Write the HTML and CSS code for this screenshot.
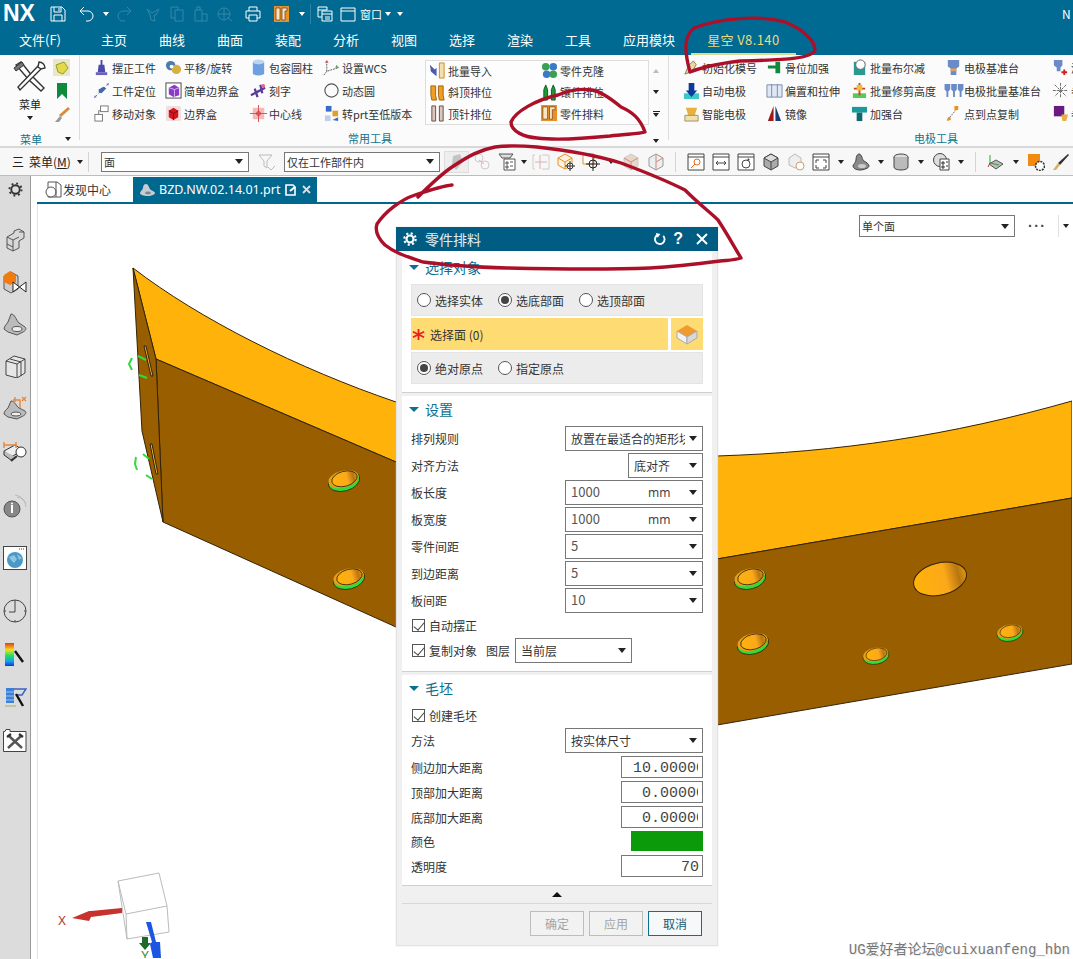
FILE: index.html
```html
<!DOCTYPE html>
<html lang="zh">
<head>
<meta charset="utf-8">
<title>NX 零件排料</title>
<link rel="stylesheet" href="styles.css">
</head>
<body>
<div class="app">
  <header class="titlebar">
    <strong class="logo">NX</strong>
    <svg class="qa s1" viewBox="0 0 16 16"><path d="M1 1h11l3 3v11H1zM4 1v5h7V1M4 15V9h8v6M9 2v3" fill="none" stroke="#fff"/></svg>
    <svg class="qa s2" viewBox="0 0 16 16"><path d="M1 5l4-4M1 5l4 4M1 5h8a5 5 0 0 1 0 10H7" fill="none" stroke="#fff"/></svg>
    <i class="caret w m7"></i>
    <svg class="qa s3 off" viewBox="0 0 16 16"><path d="M15 5l-4-4M15 5l-4 4M15 5H7a5 5 0 0 0 0 10h2" fill="none" stroke="#fff"/></svg>
    <svg class="qa s4 off" viewBox="0 0 16 16"><path d="M2 3l5 4 2-1 5-3-3 6-2 0 1 6-4-1-1-5z" fill="none" stroke="#fff"/></svg>
    <svg class="qa s5 off" viewBox="0 0 16 16"><path d="M2 1h7v3h5v11H6v-3H2zM6 4h3M6 12V4" fill="none" stroke="#fff"/></svg>
    <svg class="qa s5 off" viewBox="0 0 16 16"><path d="M2 4h7v11H2zM4 4V1h3v3M9 8h5v7H9" fill="none" stroke="#fff"/></svg>
    <svg class="qa s5 off" viewBox="0 0 16 16"><circle cx="7" cy="8" r="6" fill="none" stroke="#fff"/><path d="M1 8h12M7 2v12M10 11l5 4" fill="none" stroke="#fff"/></svg>
    <svg class="qa s6" viewBox="0 0 16 16"><path d="M4 5V1h8v4M4 12H1V5h14v7h-3M4 9h8v6H4z" fill="none" stroke="#fff"/></svg>
    <svg class="qa s7" viewBox="0 0 16 16"><rect width="15" height="16" fill="#e8902a"/><path d="M2 2h4v12H2zM8 2h5v3h-2v9H8z" fill="#f6e5c4" stroke="#6b3a10" stroke-width=".7"/></svg>
    <i class="caret w m8"></i>
    <span class="qsep"></span>
    <svg class="qa s8" viewBox="0 0 16 16"><path d="M1 1h9v3H1zM5 5h10v10H5zM5 8h10M1 4v7h4M8 11h5M8 13h5" fill="none" stroke="#fff"/></svg>
    <svg class="qa s9" viewBox="0 0 16 16"><path d="M1 2h14v13H1zM1 5h14" fill="none" stroke="#fff"/></svg>
    <span class="wintext">窗口</span>
    <i class="caret w m9"></i>
    <i class="caret w m10"></i>
    <span class="apptitle">N</span>
  </header>

  <nav class="tabs">
    <span class="tab file">文件(F)</span>
    <span class="tab">主页</span>
    <span class="tab">曲线</span>
    <span class="tab">曲面</span>
    <span class="tab">装配</span>
    <span class="tab">分析</span>
    <span class="tab">视图</span>
    <span class="tab">选择</span>
    <span class="tab">渲染</span>
    <span class="tab">工具</span>
    <span class="tab">应用模块</span>
    <span class="tab active">星空 V8.140</span>
  </nav>

  <section class="ribbon">
    <div class="group g1">
      <div class="gbody">
        <div class="bigbtn">
          <svg width="34" height="32" viewBox="0 0 34 32"><path d="M3 5l5-3 12 15 11 11-3 3-12-11z" fill="#fff" stroke="#333" stroke-width="1.4"/><path d="M26 2a6 6 0 0 1 6 6l-4 1-3-2zM25 6L5 27l2 3 21-21" fill="#fff" stroke="#333" stroke-width="1.4"/><path d="M1 8l8-6 2 3-8 6z" fill="#777" stroke="#333"/></svg>
          <span>菜单</span>
          <i class="caret"></i>
        </div>
        <div class="smallcol">
          <svg class="ri" viewBox="0 0 18 18"><rect width="17" height="17" fill="#ece6c8"/><path d="M3 6l8-3 4 6-5 6-5-2z" fill="#e4d94a" stroke="#88a030"/></svg>
          <svg class="ri" viewBox="0 0 18 18"><path d="M4 1h10v16l-5-5-5 5z" fill="#0d8a3c"/></svg>
          <svg class="ri" viewBox="0 0 18 18"><path d="M15 2l2 2-9 8-2-2z" fill="#d98a3a"/><path d="M2 17l5-6 2 2-3 4z" fill="#999"/></svg>
        </div>
      </div>
      <div class="glabel between"><span>菜单</span><i class="caret"></i></div>
    </div>

    <div class="group g2">
      <div class="grid3 cg2">
        <span class="item"><svg class="ri" viewBox="0 0 18 18"><path d="M8 1h2v5h2l1 8H5l1-8h2z" fill="#4a4aa8"/><path d="M3 14h12v3H3z" fill="#6d5fc0"/></svg>摆正工件</span>
        <span class="item"><svg class="ri" viewBox="0 0 18 18"><circle cx="6" cy="7" r="5" fill="#4a7ab0"/><circle cx="12" cy="11" r="5" fill="#d8b040"/><circle cx="7" cy="8" r="2" fill="#fff"/></svg>平移/旋转</span>
        <span class="item"><svg class="ri" viewBox="0 0 18 18"><ellipse cx="9" cy="3" rx="6" ry="2.5" fill="#bcd4f0"/><path d="M3 3v12a6 2.5 0 0 0 12 0V3a6 2.5 0 0 1-12 0z" fill="#6e9fe0"/></svg>包容圆柱</span>
        <span class="item"><svg class="ri" viewBox="0 0 18 18"><path d="M4 2v11l13-4M4 13l-3 4" fill="none" stroke="#555" stroke-dasharray="2 1"/><path d="M2 4l2-3 2 3" fill="#c55"/><path d="M14 6l3 3-4 1" fill="#6a6"/></svg>设置WCS</span>
        <span class="item"><svg class="ri" viewBox="0 0 18 18"><path d="M3 15l12-12" stroke="#5577cc" stroke-dasharray="2 2"/><path d="M6 8l5-3 3 2-5 5-3-1z" fill="#4466aa"/><path d="M1 17l3-1-2-2zM17 1l-3 1 2 2z" fill="#5577cc"/></svg>工件定位</span>
        <span class="item"><svg class="ri" viewBox="0 0 18 18"><rect x="1" y="1" width="16" height="16" fill="#fff" stroke="#444"/><path d="M4 6l6-3 5 3v8l-6 2-5-3z" fill="#8a3ac8"/><path d="M4 6l6 2 5-2M10 8v8" stroke="#d8b8f0" fill="none"/></svg>简单边界盒</span>
        <span class="item"><svg class="ri" viewBox="0 0 18 18"><path d="M1 14l15-8M5 7l3 9M11 3l2 9" stroke="#5a3a9a" stroke-width="2.4" fill="none"/><circle cx="14" cy="4" r="2" fill="#e06a8a"/></svg>刻字</span>
        <span class="item"><svg class="ri noshrink" viewBox="0 0 18 18"><circle cx="9" cy="9" r="7" fill="none" stroke="#555" stroke-width="1.2"/></svg>动态圆</span>
        <span class="item"><svg class="ri" viewBox="0 0 18 18"><rect x="8" y="1" width="8" height="6" fill="#fff" stroke="#777"/><rect x="2" y="10" width="8" height="7" fill="#fff" stroke="#777"/><path d="M6 10V6h2" fill="none" stroke="#777"/></svg>移动对象</span>
        <span class="item"><svg class="ri" viewBox="0 0 18 18"><rect x="1" y="1" width="16" height="16" rx="2" fill="#f2dede"/><path d="M4 6l5-3 5 3v7l-5 3-5-3z" fill="#d61520"/><path d="M9 9v7M4 6l5 3 5-3" stroke="#7a0a10" fill="none"/></svg>边界盒</span>
        <span class="item"><svg class="ri" viewBox="0 0 18 18"><rect x="3" y="3" width="12" height="12" fill="#f6b8b8"/><path d="M9 0v18M0 9h18" stroke="#d85050"/><circle cx="9" cy="9" r="2" fill="none" stroke="#c03030"/></svg>中心线</span>
        <span class="item"><svg class="ri" viewBox="0 0 18 18"><rect x="3" y="1" width="6" height="6" fill="#3a6ac8"/><rect x="10" y="6" width="6" height="6" fill="#e0a030"/><rect x="2" y="11" width="6" height="6" fill="#bcd0e8"/><path d="M10 16l6-3v4z" fill="#3a6ac8"/></svg>转prt至低版本</span>
      </div>
      <div class="glabel center">常用工具</div>
    </div>

    <div class="gallery">
      <div class="gbox">
        <span class="item"><svg class="ri" viewBox="0 0 18 18"><path d="M1 3l5 5 2-2v9L2 10z" fill="#4a5ab0"/><path d="M11 1h5v16h-5z" fill="#f3e0b0" stroke="#d08820"/></svg>批量导入</span>
        <span class="item"><svg class="ri" viewBox="0 0 18 18"><circle cx="5" cy="5" r="4" fill="#3aa050"/><circle cx="13" cy="5" r="4" fill="#3a7ac8"/><circle cx="6" cy="13" r="4" fill="#3a7ac8"/><circle cx="13" cy="13" r="4" fill="#3aa050"/></svg>零件克隆</span>
        <span class="item"><svg class="ri" viewBox="0 0 18 18"><path d="M2 2h5v10l1 5H3l-1-5zM10 2h5v10l1 5h-5l-1-5z" fill="#f0a020" stroke="#a06010"/></svg>斜顶排位</span>
        <span class="item"><svg class="ri" viewBox="0 0 18 18"><path d="M3 17V6l2-5 2 5v11zM11 17V6l2-5 2 5v11z" fill="#1e9a3a" stroke="#0c5a1a"/></svg>镶件排位</span>
        <span class="item"><svg class="ri" viewBox="0 0 18 18"><path d="M3 1h4v16H3zM11 1h4v16h-4z" fill="#d8c8c0" stroke="#6a4a40"/></svg>顶针排位</span>
        <span class="item"><svg class="ri" viewBox="0 0 18 18"><rect width="17" height="17" fill="#e8902a"/><path d="M2 2h5v13H2zM9 2h6v3h-3v10H9z" fill="#f6e5c4" stroke="#6b3a10" stroke-width=".7"/></svg>零件排料</span>
      </div>
      <div class="gscroll">
        <i class="caret up faint"></i>
        <i class="caret"></i>
        <span class="more"><b></b><i class="caret"></i></span>
        <i class="caret"></i>
      </div>
    </div>

    <div class="group g4">
      <div class="grid5">
        <span class="item"><svg class="ri" viewBox="0 0 18 18"><path d="M2 16l4-9 5-5 3 4-4 7z" fill="#e8d8a8" stroke="#8a7a50"/></svg>初始化模号</span>
        <span class="item"><svg class="ri" viewBox="0 0 18 18"><path d="M2 7h8V3h5v12h-5v-5H2z" fill="#0e8a3a"/></svg>骨位加强</span>
        <span class="item"><svg class="ri" viewBox="0 0 18 18"><rect x="3" y="3" width="12" height="14" fill="#2a9a90"/><circle cx="10" cy="6" r="5" fill="#fff" stroke="#666"/></svg>批量布尔减</span>
        <span class="item"><svg class="ri" viewBox="0 0 18 18"><path d="M3 1h12v7l-3 2v7H6v-7L3 8z" fill="#6a8ac8"/><path d="M6 10h6v3H6z" fill="#e8a050"/></svg>电极基准台</span>
        <span class="item"><svg class="ri" viewBox="0 0 18 18"><path d="M2 1h9v6l-2 2v4H5V9L2 7z" fill="#6a8ac8"/><path d="M13 11v6M10 14h6" stroke="#d02020" stroke-width="2"/></svg>添加</span>
        <span class="item"><svg class="ri" viewBox="0 0 18 18"><path d="M1 12h16v6H1z" fill="#3ac8c8"/><path d="M6 1h6v8h3l-6 7-6-7h3z" fill="#0c3a9a"/></svg>自动电极</span>
        <span class="item"><svg class="ri" viewBox="0 0 18 18"><path d="M1 3h16v13H1z" fill="#dfe8f5" stroke="#7a8aa8"/><path d="M6 2v14M12 2v14" stroke="#7a8aa8"/></svg>偏置和拉伸</span>
        <span class="item"><svg class="ri" viewBox="0 0 18 18"><path d="M2 12h14v5H2z" fill="#58c858"/><path d="M9 1v13M3 7h12" stroke="#d04010" stroke-width="2"/><path d="M6 3h6v6H6z" fill="#e8c040"/></svg>批量修剪高度</span>
        <span class="item"><svg class="ri wide" viewBox="0 0 22 18"><path d="M1 2h6v6l-2 2v6H3v-6L1 8zM8 2h6v6l-2 2v6h-2v-6L8 8zM15 2h6v6l-2 2v6h-2v-6l-2-2z" fill="#6a8ac8"/></svg>电极批量基准台</span>
        <span class="item"><svg class="ri" viewBox="0 0 18 18"><path d="M9 1v16M1 9h16M3 3l12 12M15 3L3 15" stroke="#666" stroke-dasharray="3 1"/></svg>参数</span>
        <span class="item"><svg class="ri" viewBox="0 0 18 18"><path d="M3 3h12l-2 6v2H5V9z" fill="#e8b040"/><path d="M2 11h14v6H2z" fill="#f0e0b0" stroke="#a09060"/></svg>智能电极</span>
        <span class="item"><svg class="ri" viewBox="0 0 18 18"><path d="M8 1v16H2z" fill="#a01818"/><path d="M10 1v16h6z" fill="#1a3a7a"/></svg>镜像</span>
        <span class="item"><svg class="ri" viewBox="0 0 18 18"><path d="M1 2h16v6H1z" fill="#1a9a9a"/><path d="M6 8h6v9H6z" fill="#0d6a70"/></svg>加强台</span>
        <span class="item"><svg class="ri" viewBox="0 0 18 18"><path d="M2 17l4-1v-3H3zM10 6l4-1V1h-4z" fill="#e89020"/><path d="M5 13l6-7" stroke="#666" stroke-dasharray="2 1"/></svg>点到点复制</span>
        <span class="item"><svg class="ri" viewBox="0 0 18 18"><path d="M2 1h11v11H2z" fill="#6a1a80"/><path d="M10 10h7l-2 7h-4z" fill="#e8b040"/></svg>参考</span>
      </div>
      <div class="glabel center">电极工具</div>
    </div>
  </section>

  <section class="selbar">
    <span class="menubtn"><span class="bars">三</span>菜单(<u>M</u>)<i class="caret"></i></span>
    <span class="vsep first"></span>
    <div class="sel type"><span>面</span><i class="caret"></i></div>
    <svg class="filter" viewBox="0 0 18 18"><path d="M1 2h13l-5 6v7l-3-2V8z" fill="none" stroke="#bbb"/><path d="M10 14l3 3 4-4" fill="none" stroke="#bbb"/></svg>
    <div class="sel scope"><span>仅在工作部件内</span><i class="caret"></i></div>
    <div class="toolstrip">
      <span class="tool pressed"><svg viewBox="0 0 18 18"><path d="M5 3l7-2 3 8-7 8-4-6z" fill="#c4c4c4"/></svg></span>
      <span class="tool"><svg viewBox="0 0 18 18"><circle cx="6" cy="5" r="4" fill="none" stroke="#ccc"/><circle cx="12" cy="12" r="4" fill="none" stroke="#ccc"/><path d="M6 7l5 4" stroke="#e0b0b0"/></svg></span>
      <span class="tool narrowr"><svg viewBox="0 0 18 18"><path d="M1 1h14l-3 4H4z" fill="#ddd" stroke="#555"/><path d="M6 6h11v11H6z" fill="#fff" stroke="#555"/><path d="M8 9h2v2H8zM8 13h2v2H8zM12 9h3M12 13h3" stroke="#555" fill="none"/></svg></span><span class="tcaret short"><i class="caret"></i></span>
      <span class="tool"><svg viewBox="0 0 18 18"><path d="M3 2H1v14h2M10 2h7v14h-7" fill="none" stroke="#ccc"/><path d="M8 2v14M3 9h12" stroke="#d8b0b0"/></svg></span>
      <span class="tool"><svg viewBox="0 0 18 18"><path d="M1 5l7-4 7 4v7l-7 4-7-4z" fill="#fdf3dc" stroke="#e8902a"/><path d="M1 5l7 4 7-4M8 9v7" fill="none" stroke="#e8902a"/><circle cx="13" cy="13" r="3" fill="#fff" stroke="#333"/><path d="M13 8v10M8 13h10" stroke="#333"/></svg></span>
      <span class="tool"><svg viewBox="0 0 18 18"><path d="M1 1h11v10H1z" fill="#fff" stroke="#e8902a"/><circle cx="11" cy="11" r="4" fill="none" stroke="#222"/><path d="M11 4v14M4 11h14" stroke="#222"/></svg></span><span class="tcaret"><i class="caret"></i></span>
      <span class="tool"><svg viewBox="0 0 18 18"><path d="M2 5l7-4 7 4v8l-7 4-7-4z" fill="#e4d8c8" stroke="#ccc"/><path d="M2 5l7 4 7-4M9 9v8" stroke="#d88" fill="none"/></svg></span>
      <span class="tool"><svg viewBox="0 0 18 18"><path d="M2 5l7-4 7 4v8l-7 4-7-4z" fill="#eee" stroke="#999"/><path d="M9 1v16M9 9l7-4" stroke="#c88" fill="none"/></svg></span>
      <span class="tcaret sep"><b></b></span>
      <span class="tool"><svg viewBox="0 0 18 18"><path d="M1 1h16v16H1zM1 4h16" fill="#fff" stroke="#444"/><circle cx="10" cy="9" r="3" fill="none" stroke="#e07020"/><path d="M8 11l-4 4" stroke="#e07020"/></svg></span>
      <span class="tool"><svg viewBox="0 0 18 18"><path d="M1 1h16v16H1zM1 4h16M4 10h10M4 10l2-2M4 10l2 2M14 10l-2-2M14 10l-2 2" fill="#fff" stroke="#444"/></svg></span>
      <span class="tool"><svg viewBox="0 0 18 18"><path d="M1 1h16v16H1zM1 4h16" fill="#fff" stroke="#444"/><circle cx="9" cy="11" r="4" fill="none" stroke="#444"/><path d="M11 5l2 2-3 1" fill="#444"/></svg></span>
      <span class="tool"><svg viewBox="0 0 18 18"><path d="M2 5l7-4 7 4v8l-7 4-7-4z" fill="#aaa" stroke="#444"/><path d="M2 5l7 4 7-4-7-4z" fill="#ddd" stroke="#444"/><path d="M9 9v8" stroke="#444"/></svg></span>
      <span class="tool"><svg viewBox="0 0 18 18"><path d="M2 5l6-4 6 4v7l-6 3-6-3z" fill="#eee" stroke="#bbb"/><circle cx="13" cy="13" r="4" fill="#fff" stroke="#c8a070"/></svg></span>
      <span class="tool"><svg viewBox="0 0 18 18"><path d="M1 1h16v16H1zM1 4h16" fill="#fff" stroke="#444"/><path d="M4 7h3M4 7v3M14 7h-3M14 7v3M4 15h3M4 15v-3M14 15h-3M14 15v-3" stroke="#444" fill="none"/></svg></span><span class="tcaret"><i class="caret"></i></span>
      <span class="tool"><svg viewBox="0 0 18 18"><path d="M7 1c3 0 3 6 5 7s5 3 5 5-5 4-9 4-7-2-7-4 3-3 3-6 1-6 3-6z" fill="#8a8a8a" stroke="#444"/><ellipse cx="10" cy="13" rx="4" ry="2" fill="#ccc"/></svg></span><span class="tcaret"><i class="caret"></i></span>
      <span class="tool"><svg viewBox="0 0 18 18"><ellipse cx="9" cy="4" rx="7" ry="3" fill="#ddd" stroke="#444"/><path d="M2 4v10c0 4 14 4 14 0V4" fill="#bbb" stroke="#444"/></svg></span><span class="tcaret"><i class="caret"></i></span>
      <span class="tool"><svg viewBox="0 0 18 18"><circle cx="8" cy="7" r="6.5" fill="#ddd" stroke="#444"/><path d="M8 6h9v11H8z" fill="#fff" stroke="#444"/><path d="M10 9h2v2h-2zM10 13h2v2h-2zM14 9h2M14 13h2" stroke="#333" fill="none"/></svg></span><span class="tcaret"><i class="caret"></i></span>
      <span class="tcaret sep"><b></b></span>
      <span class="tool"><svg viewBox="0 0 18 18"><path d="M2 11l7-4 7 4-7 5z" fill="#bbb" stroke="#555"/><path d="M3 2v8l9 2" fill="none" stroke="#3a9a3a"/><path d="M3 10l-2 4" stroke="#c33"/></svg></span><span class="tcaret"><i class="caret"></i></span>
      <span class="tool"><svg viewBox="0 0 18 18"><rect x="1" y="1" width="12" height="12" fill="#f08a10"/><circle cx="13" cy="13" r="4.5" fill="#fff" stroke="#333" stroke-width="1.6" stroke-dasharray="2 1"/></svg></span>
      <span class="tool"><svg viewBox="0 0 18 18"><path d="M16 1l1 1-9 10-2-2z" fill="#333"/><path d="M6 10l2 2-4 5H1z" fill="#d8b060"/></svg></span>
    </div>
  </section>

  <div class="main">
    <aside class="rail">
      <svg class="railicon gear" viewBox="0 0 16 16"><circle cx="8" cy="8" r="4.5" fill="none" stroke="#333" stroke-width="2"/><circle cx="8" cy="8" r="6.5" fill="none" stroke="#333" stroke-width="2" stroke-dasharray="2 3.1"/></svg>
      <svg class="railicon g1st" viewBox="0 0 24 24"><path d="M4 9l7-4 0-2 5-2 5 3v6l-5 3v7l-6 3-6-3z" fill="#d8d8d8" stroke="#555"/><path d="M4 9l6 3 6-3M10 12v11M16 4l5 0M4 16l6 3" fill="none" stroke="#555"/></svg>
      <svg class="railicon" viewBox="0 0 24 24"><path d="M1 6l7-4 7 4v13l-7 4-7-4z" fill="#ccc" stroke="#555"/><path d="M1 5l6-4 6 4v7l-6 3-6-3z" fill="#f07c10"/><path d="M10 12l13 10V12L10 22z" fill="#fff" stroke="#222"/></svg>
      <svg class="railicon" viewBox="0 0 24 24"><path d="M8 2c4 0 5 6 8 9l6 4c2 2 0 4-2 5l-6 3-9-3-4-3c0-3 3-5 4-7z" fill="#bbb" stroke="#555"/><ellipse cx="14" cy="17" rx="5" ry="2.5" fill="#eee" stroke="#555"/></svg>
      <svg class="railicon" viewBox="0 0 24 24"><path d="M3 7l8-5 11 3v14l-8 5-11-3z" fill="#e6e6e6" stroke="#444"/><path d="M3 7l11 3v14M14 10l8-5M7 5l11 3v14" fill="none" stroke="#444"/></svg>
      <svg class="railicon" viewBox="0 0 24 24"><path d="M8 5c4 0 5 5 8 7l6 3c2 2 0 4-2 5l-6 3-9-2-4-3c0-3 3-5 4-6z" fill="#bbb" stroke="#555"/><ellipse cx="13" cy="18" rx="5" ry="2" fill="#eee" stroke="#555"/><path d="M10 4h7v8M19 1l4 4M23 1l-4 4M12 1v5" fill="none" stroke="#e8863a" stroke-width="1.4"/></svg>
      <svg class="railicon" viewBox="0 0 24 24"><path d="M1 13l11-6 8 5-12 7z" fill="#eee" stroke="#333"/><path d="M1 13v4l7 5 5-3" fill="#bbb" stroke="#333"/><circle cx="18" cy="14" r="5" fill="#fff" stroke="#333"/><path d="M14 18l-6 5" stroke="#333" stroke-width="2"/><path d="M1 7h12M1 4v6M13 4v6" stroke="#e8863a" stroke-width="1.4"/></svg>
      <svg class="railicon info" viewBox="0 0 24 24"><circle cx="9" cy="15" r="8" fill="#888" stroke="#555"/><path d="M9 11v8" stroke="#fff" stroke-width="2"/><circle cx="9" cy="9.6" r="1" fill="#fff"/><path d="M14 3a10 10 0 0 1 9 10M12 1a14 14 0 0 1 11 9" fill="none" stroke="#bbb"/></svg>
      <svg class="railicon web" viewBox="0 0 24 24"><rect x=".5" y=".5" width="23" height="23" fill="#fff" stroke="#444"/><circle cx="12" cy="14" r="8" fill="#4a98c8"/><path d="M6 11l5-2 3 4-3 4-3-3zM14 8l5 4-3 2z" fill="#8fc4dc"/><path d="M16 3h1M18 3h1M20 3h1" stroke="#444"/></svg>
      <svg class="railicon clock" viewBox="0 0 24 24"><circle cx="12" cy="12" r="11" fill="none" stroke="#444"/><path d="M12 3v10H6M12 1v2M12 21v2M1 12h2M21 12h2" fill="none" stroke="#444"/></svg>
      <svg class="railicon palette" viewBox="0 0 24 24"><defs><linearGradient id="spec" x1="0" y1="0" x2="0" y2="1"><stop offset="0" stop-color="#e83a10"/><stop offset=".3" stop-color="#f0e020"/><stop offset=".55" stop-color="#20e060"/><stop offset=".8" stop-color="#10a0f0"/><stop offset="1" stop-color="#1030e0"/></linearGradient></defs><rect x="2" y="1" width="9" height="23" fill="url(#spec)"/><path d="M12 9l8 11" stroke="#111" stroke-width="2.4"/></svg>
      <svg class="railicon palette2" viewBox="0 0 24 24"><path d="M3 3h8v15H3z" fill="#3a80d8"/><path d="M3 7h8M3 11h8M3 15h8" stroke="#9ac4f0"/><path d="M11 4h12l-4 6h-5" fill="none" stroke="#3a60c0" stroke-width="1.5"/><path d="M13 9l7 12" stroke="#111" stroke-width="2.4"/><path d="M2 21h11" stroke="#a0b060"/></svg>
      <svg class="railicon tools" viewBox="0 0 24 24"><path d="M.5 3.500h1.500l1-2h4v2h16v20H.5z" fill="#fff" stroke="#444"/><path d="M6 8l13 12M18 8L5 20" stroke="#555" stroke-width="2.4"/><path d="M4 9l4-3M16 6l4 3" stroke="#333" stroke-width="2.2"/></svg>
    </aside>

    <div class="work">
      <div class="doctabs">
        <span class="doctab plain"><svg width="17" height="17" viewBox="0 0 17 17"><path d="M3 1h9l4 3v12H3z" fill="none" stroke="#555"/><circle cx="6" cy="11" r="5" fill="#fff" stroke="#555"/><path d="M11 1v15" stroke="#555"/></svg>发现中心</span>
        <span class="doctab cur"><svg width="15" height="14" viewBox="0 0 15 14"><path d="M6 1c3 0 3 5 5 6s4 2 4 3-3 3-7 3-8-1-8-3 3-3 3-5 1-4 3-4z" fill="#c8ccd0"/><ellipse cx="8" cy="10" rx="3" ry="1.4" fill="#7a8a90"/></svg><span class="fname">BZD.NW.02.14.01.prt</span><svg class="dirty" width="11" height="12" viewBox="0 0 11 12"><path d="M1 1h7l2 2v8H1z" fill="none" stroke="#fff" stroke-width="1.6"/><path d="M5 7l5-4" stroke="#fff" stroke-width="2"/></svg><svg class="x" width="9" height="9" viewBox="0 0 9 9"><path d="M1 1l7 7M8 1L1 8" stroke="#d6e4ea" stroke-width="1.8"/></svg></span>
      </div>
      <div class="viewport">
        <svg class="model" viewBox="38 205 1035 754" width="1035" height="754">
          <defs>
            <linearGradient id="hole" x1="0" y1="0" x2="1" y2="0"><stop offset="0" stop-color="#ffb30a"/><stop offset=".6" stop-color="#fca81a"/><stop offset=".85" stop-color="#b87510"/><stop offset="1" stop-color="#e09a10"/></linearGradient>
            <g id="h">
              <ellipse rx="16" ry="10" fill="#2fdc3c" stroke="#33230a" stroke-width=".8"/>
              <ellipse cy="-2" rx="15.500" ry="8.500" fill="#e8a018"/>
              <ellipse cx="1" cy="-2" rx="13" ry="7.500" fill="url(#hole)" stroke="#33230a" stroke-width=".8"/>
            </g>
          </defs>
          <path d="M134 269C200 320 300 370 397 403 500 440 620 458 718 457 840 453 950 437 1073 402V499L718 560C600 550 480 500 397 463L157 360Z" fill="#ffb30a" stroke="#33230a"/>
          <path d="M157 360L397 463C480 500 600 550 718 560L1073 499V665L718 726C600 700 480 670 397 628L164 523Z" fill="#985e00" stroke="#33230a"/>
          <path d="M134 269L157 360 164 523 143 432Z" fill="#985e00" stroke="#33230a"/>
          <path d="M147 347l7 30-2 0-7-30z" fill="#e8b030" stroke="#33230a"/>
          <path d="M153 445l6 30-2 0-6-30z" fill="#e8b030" stroke="#33230a"/>
          <g stroke="#2fdc3c" stroke-width="2" fill="none">
            <path d="M133 359l-3 6 3 6M139 357l8 4M140 376l8 3M137 458l-1 7 2 6M144 455l6 5M147 476l6 4"/>
          </g>
          <use href="#h" transform="translate(345 482) rotate(-15)"/>
          <use href="#h" transform="translate(350 580) rotate(-15)"/>
          <use href="#h" transform="translate(751 580) rotate(-15)"/>
          <use href="#h" transform="translate(754 645) rotate(-15)"/>
          <use href="#h" transform="translate(877 657) rotate(-12) scale(.82)"/>
          <use href="#h" transform="translate(1011 634) rotate(-12) scale(.82)"/>
          <ellipse cx="941" cy="580" rx="27" ry="16" transform="rotate(-14 941 580)" fill="url(#hole)" stroke="#33230a"/>
          <g fill="none" stroke="#bbb">
            <path d="M119 882l41-8 8 33-41 8zM119 882l9 58 42-7-2-26M127 915l1 25"/>
          </g>
          <path d="M123 909L92 912 90 912 73 919 90 922 92 918 123 914Z" fill="#c8322e"/>
          <path d="M147 923l5 0 5 20 4 0 1 16-8 0-3-14 2-2z" fill="#1a56e0"/>
          <path d="M143 938h6v6h3l-6 7-6-7h3z" fill="#1e6a2a"/>
          <text class="axis ax" x="59" y="926">X</text>
          <text class="axis ay" x="142" y="961">Y</text>
        </svg>
        <div class="viewcontrols">
          <div class="sel facemode"><span>单个面</span><i class="caret"></i></div>
          <span class="dots">···</span>
          <span class="vsep light"></span>
          <i class="caret"></i>
        </div>
      </div>
    </div>
  </div>

  <div class="dialog">
    <div class="dhead">
      <svg class="dgear" viewBox="0 0 16 16"><circle cx="8" cy="8" r="4" fill="none" stroke="#fff" stroke-width="2.4"/><circle cx="8" cy="8" r="6.5" fill="none" stroke="#fff" stroke-width="2.4" stroke-dasharray="2.4 2.7"/></svg>
      <span class="dtitle">零件排料</span>
      <svg class="dreset" viewBox="0 0 14 14"><path d="M5 2a5.2 5.2 0 1 0 6 1" fill="none" stroke="#fff" stroke-width="2"/><path d="M3 0l5 1-3 4z" fill="#fff"/></svg>
      <span class="dq">?</span>
      <svg class="dx" viewBox="0 0 14 14"><path d="M2 2l10 10M12 2L2 12" stroke="#fff" stroke-width="2"/></svg>
    </div>
    <div class="dbody">
      <section class="dsec s-a">
        <h3><i class="tri"></i>选择对象</h3>
        <div class="graybox r1">
          <label class="radio"><i></i>选择实体</label>
          <label class="radio on"><i></i>选底部面</label>
          <label class="radio"><i></i>选顶部面</label>
        </div>
        <div class="pick">
          <div class="pickmain"><svg class="star" viewBox="0 0 14 14"><path d="M7 1v12M1 4l12 6M13 4L1 10" stroke="#ee1c25" stroke-width="2"/></svg>选择面 (0)</div>
          <div class="pickbtn"><svg width="24" height="24" viewBox="0 0 24 24"><path d="M2 9l10-6 10 6-10 6z" fill="#f09a30"/><path d="M2 9v7l10 6V15z" fill="#f2f2f2" stroke="#aaa"/><path d="M22 9v7l-10 6V15z" fill="#d8d8d8" stroke="#aaa"/></svg></div>
        </div>
        <div class="graybox r3">
          <label class="radio on"><i></i>绝对原点</label>
          <label class="radio"><i></i>指定原点</label>
        </div>
      </section>

      <section class="dsec s-b">
        <h3><i class="tri"></i>设置</h3>
        <div class="row"><span>排列规则</span><div class="sel full"><span class="clip">放置在最适合的矩形块</span><i class="caret"></i></div></div>
        <div class="row"><span>对齐方法</span><div class="sel short"><span>底对齐</span><i class="caret"></i></div></div>
        <div class="row"><span>板长度</span><div class="sel full"><span class="num1">1000</span><span class="unit">mm</span><i class="caret"></i></div></div>
        <div class="row"><span>板宽度</span><div class="sel full"><span class="num1">1000</span><span class="unit">mm</span><i class="caret"></i></div></div>
        <div class="row"><span>零件间距</span><div class="sel full"><span class="num1">5</span><i class="caret"></i></div></div>
        <div class="row"><span>到边距离</span><div class="sel full"><span class="num1">5</span><i class="caret"></i></div></div>
        <div class="row"><span>板间距</span><div class="sel full"><span class="num1">10</span><i class="caret"></i></div></div>
        <label class="check c1"><i></i>自动摆正</label>
        <div class="copyrow">
          <label class="check"><i></i>复制对象</label>
          <span class="layer">图层</span>
          <div class="sel layersel"><span>当前层</span><i class="caret"></i></div>
        </div>
      </section>

      <section class="dsec s-c">
        <h3><i class="tri"></i>毛坯</h3>
        <label class="check c2"><i></i>创建毛坯</label>
        <div class="row"><span>方法</span><div class="sel full"><span>按实体尺寸</span><i class="caret"></i></div></div>
        <div class="row rn first"><span>侧边加大距离</span><div class="numbox"><div><b>10.00000</b></div></div></div>
        <div class="row rn"><span>顶部加大距离</span><div class="numbox"><div><b>0.00000</b></div></div></div>
        <div class="row rn"><span>底部加大距离</span><div class="numbox"><div><b>0.00000</b></div></div></div>
        <div class="row rc"><span>颜色</span><div class="swatch"></div></div>
        <div class="row rn t"><span>透明度</span><div class="numbox plain"><div><b>70</b></div></div></div>
      </section>

      <div class="collapse"><i class="caret up"></i></div>
      <footer class="dfoot">
        <span class="btn dis">确定</span>
        <span class="btn dis">应用</span>
        <span class="btn main-btn">取消</span>
      </footer>
    </div>
  </div>

  <svg class="scribble" viewBox="0 0 1073 959" width="1073" height="959">
    <path d="M690 72C684 50 684 36 694 28 720 18 760 15 785 22 805 30 815 42 815 50 812 58 790 60 740 61 715 64 700 68 690 72Z"/>
    <path d="M558 95C535 100 515 112 511 122 511 132 525 137 537 138 560 141 590 138 610 136 625 134 640 134 645 132 640 118 632 112 621 107 610 98 600 91 592 90 578 88 565 92 558 95Z"/>
    <path d="M418 197C430 185 440 175 452 167 470 155 480 150 495 147 510 145 525 146 537 147 565 150 595 155 621 163 645 172 665 180 685 190 700 205 710 212 718 220 726 232 735 248 741 258 735 260 730 260 720 261 690 265 670 267 650 268 600 270 550 269 507 268 470 267 445 265 423 262 405 256 395 253 385 245 378 238 375 230 377 224 385 212 400 200 415 195 430 190 442 186 452 185"/>
  </svg>

  <div class="watermark">UG爱好者论坛@cuixuanfeng_hbn</div>
</div>
</body>
</html>
```

FILE: styles.css
```css
* { box-sizing: border-box; }
html, body { margin: 0; padding: 0; }
body {
  width: 1073px; height: 959px; overflow: hidden; background: #fff;
  font-family: "Noto Sans CJK SC", "Noto Sans", sans-serif; font-size: 12px; color: #333;
}
.app { position: relative; width: 1073px; height: 959px; overflow: hidden; display: flex; flex-direction: column; }
i { font-style: normal; }

.caret { display: inline-block; width: 0; height: 0; border: 3.5px solid transparent; border-top: 4px solid #222; border-bottom: 0; flex: none; }
.caret.w { border-top-color: #fff; }
.caret.up { border-top: 0; border-bottom: 5px solid #111; border-left-width: 5px; border-right-width: 5px; }
.caret.faint { border-bottom: 4px solid #bbb; border-left-width: 3.5px; border-right-width: 3.5px; }

/* title bar */
.titlebar { height: 27px; background: #006a92; display: flex; align-items: center; flex: none; color: #fff; position: relative; }
.logo { font: bold 23px/27px "Liberation Sans", sans-serif; margin-left: 3px; width: 33px; letter-spacing: -.2px; }
.qa { width: 16px; height: 16px; flex: none; }
.off { opacity: .2; }
.s1 { margin-left: 14px; }
.s2 { margin-left: 13px; }
.m7 { margin-left: 8px; }
.s3 { margin-left: 7px; }
.s4 { margin-left: 13px; }
.s5 { margin-left: 8px; }
.s6 { margin-left: 12px; }
.s7 { margin-left: 13px; }
.m8 { margin-left: 9px; }
.qsep { width: 1px; height: 20px; background: #2d86a8; margin-left: 5px; }
.s8 { margin-left: 6px; }
.s9 { margin-left: 7px; }
.wintext { font-size: 11px; margin-left: 4px; width: 22px; }
.m9 { margin-left: 3px; }
.m10 { margin-left: 6px; }
.apptitle { margin-left: auto; font-size: 12px; width: 11px; overflow: hidden; }

/* tabs */
.tabs { height: 28px; background: #006a92; display: flex; gap: 32px; padding-left: 19px; align-items: center; color: #fff; flex: none; font-size: 13px; }
.tab { line-height: 20px; white-space: nowrap; position: relative; top: -1px; }
.tab.file { margin-right: 8px; }
.tab.active { color: #e6dc82; position: relative; letter-spacing: .4px; }
.tab.active::after { content: ""; position: absolute; left: -16px; right: -16px; bottom: -5px; height: 2px; background: #d6dc94; }

/* ribbon */
.ribbon { height: 93px; background: #fbfbfb; border-bottom: 2px solid #d8d8d8; display: flex; flex: none; font-size: 11px; overflow: hidden; position: relative; }
.group { display: flex; flex-direction: column; justify-content: space-between; position: relative; flex: none; padding-top: 1px; }
.glabel { height: 18px; line-height: 16px; color: #0e7390; text-align: center; font-size: 11px; margin-bottom: -2px; }
.glabel.between { display: flex; justify-content: space-between; align-items: center; padding: 0 8px 0 20px; }
.g1 { width: 80px; border-right: 1px solid #ddd; margin-bottom: 6px; }
.g1 .glabel { margin-bottom: -8px; }
.gbody { display: flex; height: 70px; }
.bigbtn { width: 52px; display: flex; flex-direction: column; align-items: center; padding: 4px 0 0 8px; font-size: 11px; color: #222; line-height: 16px; }
.bigbtn svg { margin-bottom: 4px; }
.bigbtn .caret { margin-top: 4px; }
.smallcol { display: flex; flex-direction: column; padding-top: 3px; }
.smallcol .ri { margin: 0 0 5px 1px; width: 18px; height: 18px; }

.ri { width: 17px; height: 17px; flex: none; }
.ri.wide { width: 22px; margin-left: -2px; margin-right: -3px; }
.item { display: flex; align-items: center; gap: 2px; height: 23px; white-space: nowrap; color: #333; }

.g2 { width: 345px; padding-left: 13px; }
.grid3 { display: grid; grid-template-columns: 72px 85px 73px 110px; grid-auto-rows: 23px; }
.g2 .glabel { padding-left: 222px; }

.gallery { width: 244px; display: flex; flex: none; border-right: 1px solid #ddd; margin-bottom: 6px; }
.gbox { width: 224px; height: 65px; margin-top: 5px; border: 1px solid #ddd; background: #fdfdfd; display: grid; grid-template-columns: 112px 1fr; grid-auto-rows: 21.5px; padding: 0 0 0 3px; }
.gbox .item { height: 21.5px; margin-top: -1px; }
.gscroll { width: 20px; display: flex; flex-direction: column; align-items: center; padding: 14px 0 0 0; gap: 17px; margin-left: -3px; }
.gscroll > :last-child { margin-top: 5px; }
.more { display: flex; flex-direction: column; align-items: center; gap: 1px; }
.more b { width: 7px; height: 1px; background: #222; }
.g4 { flex: 1; padding-left: 14px; min-width: 0; }
.grid5 { display: grid; grid-template-columns: 83px 85px 94px 107px 60px; grid-auto-rows: 23px; width: 440px; }
.g4 .glabel { width: 300px; padding-left: 231px; text-align: left; }

/* selection bar */
.selbar { height: 28px; background: #f7f7f7; border-bottom: 1px solid #bcbcbc; display: flex; align-items: center; flex: none; padding-left: 12px; position: relative; }
.menubtn { display: flex; align-items: center; width: 76px; color: #222; white-space: nowrap; }
.bars { width: 17px; }
.menubtn .caret { margin-left: 6px; }
.vsep { width: 1px; height: 20px; background: #d4d4d4; display: block; flex: none; }
.vsep.first { margin-right: 12px; }
.sel { border: 1px solid #777; background: #fff; display: flex; align-items: center; position: relative; padding: 0 5px 0 5px; height: 25px; color: #333; flex: none; white-space: nowrap; }
.sel .caret { margin-left: auto; border-left-width: 4px; border-right-width: 4px; border-top-width: 5px; }
.sel.type { width: 148px; height: 20px; font-size: 11px; padding-left: 2px; }
.filter { width: 18px; height: 18px; margin: 0 8px 0 9px; flex: none; }
.sel.scope { width: 156px; height: 20px; font-size: 11px; padding-left: 2px; }
.toolstrip { display: flex; align-items: center; margin-left: 4px; flex: none; }
.tool { width: 25px; height: 22px; display: flex; align-items: center; justify-content: center; flex: none; }
.tool svg { width: 18px; height: 18px; }
.tool.pressed { background: #eee; box-shadow: inset 0 0 0 1px #ddd; }
.tcaret { width: 15px; display: flex; justify-content: center; flex: none; }
.tcaret.short { width: 9px; }
.tcaret.sep b { width: 1px; height: 20px; background: #d4d4d4; display: block; }

/* main */
.main { flex: 1; display: flex; min-height: 0; }
.rail { width: 31px; background: #dcdcdc; border-right: 1px solid #9a9a9a; display: flex; flex-direction: column; align-items: center; padding-top: 6px; flex: none; }
.railicon { width: 24px; height: 24px; margin-top: 18px; flex: none; }
.railicon.gear { width: 15px; height: 15px; margin-top: 0; }
.railicon.g1st { margin-top: 31px; }
.railicon.info { margin-top: 32px; }
.railicon.web { margin-top: 28px; }
.railicon.clock { margin-top: 29px; }
.railicon.palette, .railicon.palette2, .railicon.tools { margin-top: 19px; }

.work { flex: 1; display: flex; flex-direction: column; min-width: 0; padding-left: 6px; background: #fff; }
.doctabs { height: 28px; border-bottom: 2px solid #00678f; display: flex; flex: none; padding-top: 1px; }
.doctab { display: flex; align-items: center; height: 25px; color: #333; }
.doctab.plain { width: 96px; padding-left: 8px; gap: 1px; }
.doctab.cur { width: 184px; background: #00678f; color: #fff; padding-left: 7px; gap: 4px; font-size: 13px; }
.fname { font-family: "Noto Sans", sans-serif; font-size: 12.5px; width: 120px; white-space: nowrap; }
.dirty { margin-left: 2px; }
.x { margin-left: 2px; }
.viewport { flex: 1; position: relative; border-left: 1px solid #dfe3e6; overflow: hidden; }
.model { position: absolute; left: -1px; top: 0; display: block; }
.axis { font: 12px "Liberation Sans", sans-serif; }
.ax { fill: #b03030; }
.ay { fill: #2a8a3a; }
.viewcontrols { position: absolute; top: 11px; left: 821px; display: flex; align-items: center; width: 214px; }
.sel.facemode { width: 156px; height: 22px; font-size: 11px; padding-left: 2px; }
.dots { margin-left: 13px; width: 30px; font: bold 14px/10px "Liberation Sans", sans-serif; letter-spacing: 1.5px; color: #444; }
.viewcontrols > .caret { margin-left: 4px; }
.vsep.light { height: 22px; background: #e0e0e0; }

/* dialog */
.dialog { position: absolute; left: 396px; top: 227px; width: 322px; height: 719px; background: #f0f0f0; border: 1px solid #e2e2e2; border-top: 0; display: flex; flex-direction: column; box-shadow: 0 0 1px #ccc; }
.dhead { height: 24px; background: #005c82; display: flex; align-items: center; padding: 0 9px 0 7px; color: #fff; flex: none; margin: 0 -1px; }
.dgear { width: 14px; height: 14px; }
.dtitle { font-size: 14px; margin-left: 8px; flex: 1; color: #e4eef2; }
.dreset { width: 13px; height: 13px; }
.dq { font: bold 16px/20px "Liberation Sans", sans-serif; margin: 0 12px 0 7px; }
.dx { width: 14px; height: 14px; }
.dbody { flex: 1; padding: 0 5px; display: flex; flex-direction: column; }
.dsec { background: #fff; padding: 0 9px 0 9px; border-bottom: 1px solid #cfcfcf; flex: none; }
.dsec h3 { margin: 0; height: 22px; font-size: 14px; line-height: 22px; font-weight: normal; color: #0c6f8e; display: flex; align-items: center; gap: 6px; }
.tri { width: 0; height: 0; border: 5px solid transparent; border-top: 5px solid #0c6f8e; border-bottom: 0; margin-left: -2px; }
.s-a { height: 142px; padding-top: 5px; }
.graybox { background: #ececec; border: 1px solid #e4e4e4; display: flex; align-items: center; padding-left: 5px; }
.graybox.r1 { height: 32px; margin-top: 6px; gap: 15px; }
.graybox.r3 { height: 32px; margin-top: 2px; gap: 15px; }
.radio { display: flex; align-items: center; gap: 4px; color: #333; }
.radio i { width: 14px; height: 14px; border: 1px solid #555; border-radius: 50%; background: #fff; display: block; position: relative; }
.radio.on i::after { content: ""; position: absolute; inset: 2px; background: #444; border-radius: 50%; }
.pick { display: flex; gap: 3px; margin-top: 2px; height: 32px; }
.pickmain { flex: 1; background: #ffdc73; display: flex; align-items: center; gap: 5px; padding-left: 1px; }
.star { width: 13px; height: 13px; }
.pickbtn { width: 32px; background: #ffdc73; display: flex; align-items: center; justify-content: center; }
.s-b { margin-top: 3px; height: 276px; padding-top: 2px; }
.row { display: flex; align-items: center; justify-content: space-between; height: 25px; margin-top: 2px; }
.s-b h3 + .row { margin-top: 6px; }
.sel.full { width: 138px; }
.sel.short { width: 75px; }
.clip { width: 114px; overflow: hidden; white-space: nowrap; }
.num1 { color: #555; position: relative; top: -1px; font-size: 13px; }
.unit { position: absolute; left: 82px; font: 12px "Noto Sans", sans-serif; color: #444; }
.check { display: flex; align-items: center; gap: 4px; color: #333; height: 22px; }
.check i { width: 13px; height: 13px; border: 1px solid #555; background: #fff; display: block; position: relative; margin-left: 1px; }
.check i::after { content: ""; position: absolute; left: 3px; top: 0; width: 5px; height: 9px; border: solid #444; border-width: 0 1px 1px 0; transform: rotate(40deg); }
.c1 { margin-top: 1px; }
.copyrow { display: flex; align-items: center; height: 25px; margin-top: 2px; }
.layer { margin-left: 9px; }
.sel.layersel { width: 117px; margin-left: 5px; }
.s-c { margin-top: 3px; height: 211px; padding-top: 2px; }
.s-c .c2 { margin-top: 5px; }
.rn { height: 22px; margin-top: 3px; }
.rc { height: 20px; margin-top: 3px; }
.rn.t { margin-top: 4px; }
.rn.first { margin-top: 3px; }
.numbox { width: 82px; height: 22px; border: 1px solid #777; background: #fff; padding-right: 4px; }
.numbox.plain { padding-right: 3px; }
.numbox div { overflow: hidden; text-align: right; height: 20px; line-height: 20px; white-space: nowrap; }
.numbox b { font: 15px/20px "Liberation Mono", monospace; color: #444; display: inline-block; margin-right: -7px; }
.numbox.plain b { margin-right: 0; }
.swatch { width: 72px; height: 20px; background: #0a9a0a; }
.collapse { height: 18px; border-bottom: 1px solid #d8d8d8; display: flex; align-items: center; justify-content: center; flex: none; }
.dfoot { display: flex; justify-content: flex-end; gap: 5px; padding: 7px 10px 0 0; }
.btn { width: 54px; height: 25px; display: flex; align-items: center; justify-content: center; border: 1px solid #bdbdbd; color: #a4a4a4; background: #f2f2f2; }
.main-btn { border-color: #0f6f8e; color: #135a75; background: #f6f9fa; }

/* annotation */
.scribble { position: absolute; left: 0; top: 0; pointer-events: none; }
.scribble path { fill: none; stroke: #ac1029; stroke-width: 3.4; stroke-linecap: round; stroke-linejoin: round; }
.watermark { position: absolute; right: 3px; bottom: 1px; font: 14px/16px "Liberation Mono", "Noto Sans CJK SC", monospace; color: #777; text-shadow: 1px 1px 0 #eee; white-space: nowrap; }
```
